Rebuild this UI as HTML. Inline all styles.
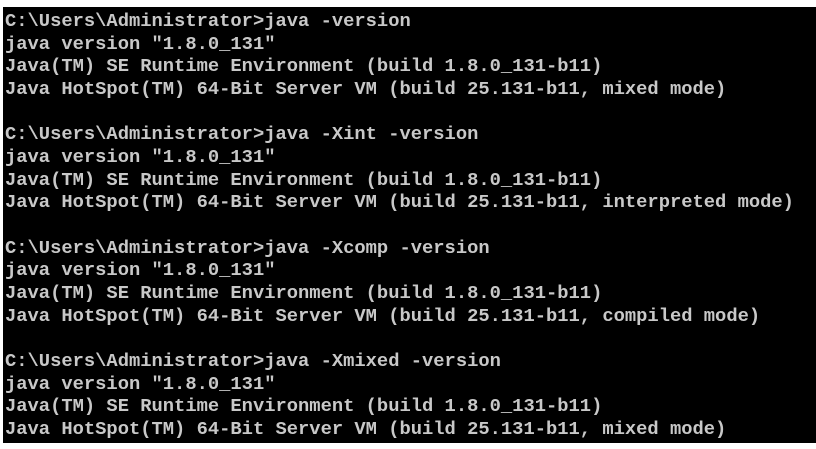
<!DOCTYPE html>
<html><head><meta charset="utf-8"><style>
html,body{margin:0;padding:0;background:#fff;width:816px;height:449px;overflow:hidden}
#c{position:absolute;left:3px;top:7px;width:813px;height:436px;background:#000}
pre{margin:0;position:absolute;left:2px;top:3px;font-family:"Liberation Mono",monospace;font-weight:bold;font-size:18.8px;line-height:22.67px;color:#c8c8c8;letter-spacing:0}
</style></head><body><div id="c"><pre>C:\Users\Administrator&gt;java -version
java version "1.8.0_131"
Java(TM) SE Runtime Environment (build 1.8.0_131-b11)
Java HotSpot(TM) 64-Bit Server VM (build 25.131-b11, mixed mode)

C:\Users\Administrator&gt;java -Xint -version
java version "1.8.0_131"
Java(TM) SE Runtime Environment (build 1.8.0_131-b11)
Java HotSpot(TM) 64-Bit Server VM (build 25.131-b11, interpreted mode)

C:\Users\Administrator&gt;java -Xcomp -version
java version "1.8.0_131"
Java(TM) SE Runtime Environment (build 1.8.0_131-b11)
Java HotSpot(TM) 64-Bit Server VM (build 25.131-b11, compiled mode)

C:\Users\Administrator&gt;java -Xmixed -version
java version "1.8.0_131"
Java(TM) SE Runtime Environment (build 1.8.0_131-b11)
Java HotSpot(TM) 64-Bit Server VM (build 25.131-b11, mixed mode)</pre></div></body></html>
